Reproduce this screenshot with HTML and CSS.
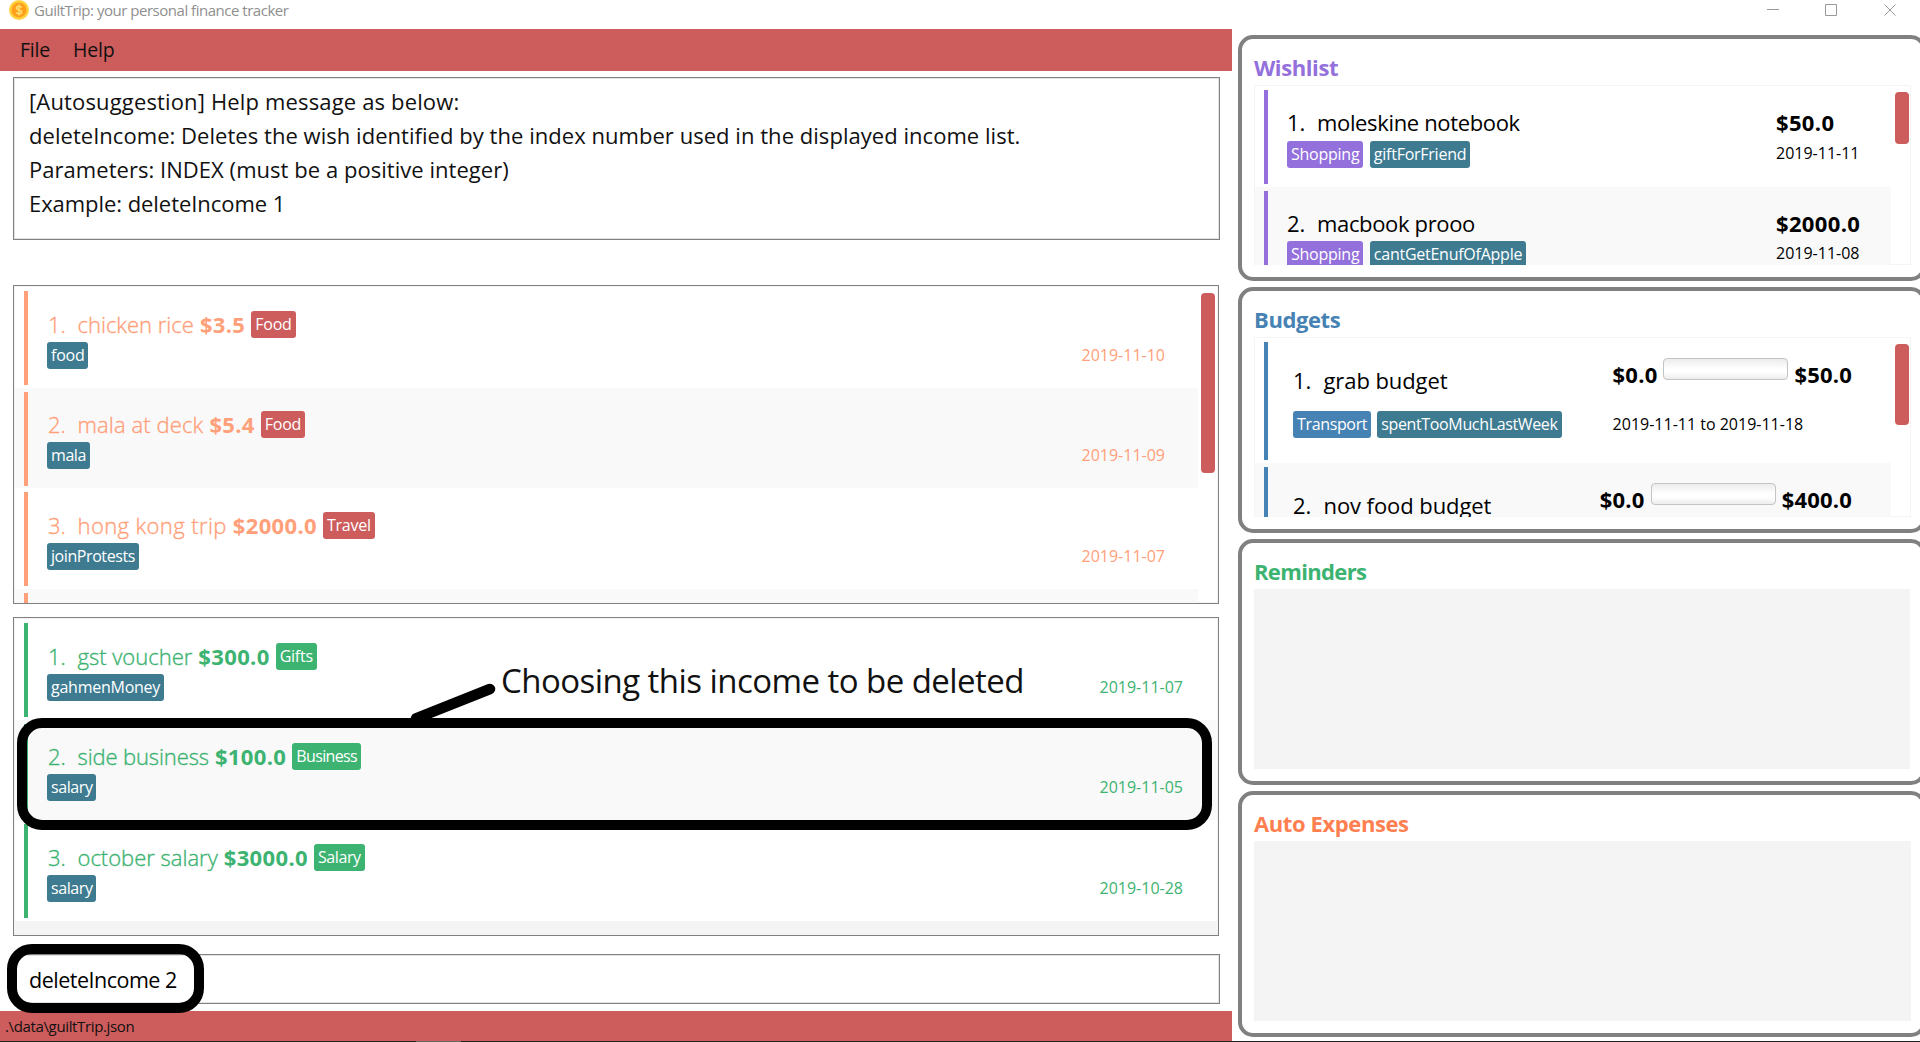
FILE: index.html
```
<!DOCTYPE html>
<html lang="en">
<head>
<meta charset="utf-8">
<title>GuiltTrip: your personal finance tracker</title>
<link rel="stylesheet" href="styles.css">
</head>
<body>
<div class="window">
  <header class="titlebar">
    <svg class="coin" viewBox="0 0 20 20"><circle cx="10" cy="10" r="10" fill="#ffd23f"/><circle cx="10" cy="10" r="7.6" fill="#ff9f1c"/><path d="M12.7 7.6C12.3 6.6 11.3 6.2 10 6.2c-1.500 0-2.600.7-2.600 1.900 0 2.600 5.300 1.200 5.300 3.900 0 1.200-1.200 1.900-2.700 1.900-1.400 0-2.500-.5-2.800-1.600M10 4.600v10.800" fill="none" stroke="#ffe070" stroke-width="1.500"/></svg>
    <span class="caption">GuiltTrip: your personal finance tracker</span>
    <svg class="controls" viewBox="0 0 130 14"><path d="M0 6.500h12M58.500 1.500h11v11h-11zM117.500 1.500l11 11M128.500 1.500l-11 11" fill="none" stroke="#999" stroke-width="1"/></svg>
  </header>

  <div class="content">
    <main class="main">
      <nav class="menubar"><span>File</span><span>Help</span></nav>
      <section class="result">
        <p class="lead">[Autosuggestion] Help message as below:</p>
        <p>deleteIncome: Deletes the wish identified by the index number used in the displayed income list.</p>
        <p>Parameters: INDEX (must be a positive integer)</p>
        <p class="example">Example: deleteIncome 1</p>
      </section>

      <section class="records expenses">
        <ul class="rows">
          <li class="row"><div class="card">
            <div class="line"><span class="idx">1.</span><span class="name">chicken rice</span><b>$3.5</b><span class="tag category">Food</span></div>
            <div class="line second"><span class="tag">food</span><time>2019-11-10</time></div>
          </div></li>
          <li class="row"><div class="card">
            <div class="line"><span class="idx">2.</span><span class="name loose">mala at deck</span><b>$5.4</b><span class="tag category">Food</span></div>
            <div class="line second"><span class="tag tight">mala</span><time>2019-11-09</time></div>
          </div></li>
          <li class="row"><div class="card">
            <div class="line"><span class="idx">3.</span><span class="name looser">hong kong trip</span><b>$2000.0</b><span class="tag category">Travel</span></div>
            <div class="line second"><span class="tag tight">joinProtests</span><time>2019-11-07</time></div>
          </div></li>
          <li class="row"><div class="card"></div></li>
        </ul>
        <div class="track"><div class="thumb"></div></div>
      </section>

      <section class="records incomes">
        <ul class="rows">
          <li class="row"><div class="card">
            <div class="line"><span class="idx">1.</span><span class="name">gst voucher</span><b>$300.0</b><span class="tag category">Gifts</span></div>
            <div class="line second"><span class="tag">gahmenMoney</span><time>2019-11-07</time></div>
          </div></li>
          <li class="row"><div class="card">
            <div class="line"><span class="idx">2.</span><span class="name snug">side business</span><b>$100.0</b><span class="tag category tighter">Business</span></div>
            <div class="line second"><span class="tag tight">salary</span><time>2019-11-05</time></div>
          </div></li>
          <li class="row"><div class="card">
            <div class="line"><span class="idx">3.</span><span class="name">october salary</span><b>$3000.0</b><span class="tag category tight">Salary</span></div>
            <div class="line second"><span class="tag tight">salary</span><time>2019-10-28</time></div>
          </div></li>
        </ul>
      </section>

      <div class="command">deleteIncome 2</div>
      <footer class="status">.\data\guiltTrip.json</footer>
    </main>

    <aside class="side">
      <section class="panel wishes">
        <h2>Wishlist</h2>
        <div class="list">
          <ul class="rows">
            <li class="row"><div class="card">
              <div class="details">
                <div class="line"><span class="idx">1.</span><span class="name">moleskine notebook</span></div>
                <div class="line second"><span class="tag category">Shopping</span><span class="tag">giftForFriend</span></div>
              </div>
              <div class="figures"><b>$50.0</b><time>2019-11-11</time></div>
            </div></li>
            <li class="row"><div class="card">
              <div class="details">
                <div class="line"><span class="idx">2.</span><span class="name">macbook prooo</span></div>
                <div class="line second"><span class="tag category">Shopping</span><span class="tag">cantGetEnufOfApple</span></div>
              </div>
              <div class="figures"><b>$2000.0</b><time>2019-11-08</time></div>
            </div></li>
          </ul>
          <div class="track"><div class="thumb"></div></div>
        </div>
      </section>

      <section class="panel budgets">
        <h2>Budgets</h2>
        <div class="list">
          <ul class="rows">
            <li class="row"><div class="card">
              <div class="details">
                <div class="line"><span class="idx">1.</span><span class="name">grab budget</span></div>
                <div class="line second"><span class="tag category">Transport</span><span class="tag">spentTooMuchLastWeek</span></div>
              </div>
              <div class="figures"><div class="spent"><b>$0.0</b><span class="progress"></span><b>$50.0</b></div><time>2019-11-11 to 2019-11-18</time></div>
            </div></li>
            <li class="row"><div class="card">
              <div class="details">
                <div class="line"><span class="idx">2.</span><span class="name">nov food budget</span></div>
              </div>
              <div class="figures"><div class="spent"><b>$0.0</b><span class="progress"></span><b>$400.0</b></div></div>
            </div></li>
          </ul>
          <div class="track"><div class="thumb"></div></div>
        </div>
      </section>

      <section class="panel reminders"><h2>Reminders</h2><div class="list"></div></section>
      <section class="panel autos"><h2>Auto Expenses</h2><div class="list"></div></section>
    </aside>
  </div>

  <div class="desktop-edge"><span></span></div>

  <div class="callout callout-row"></div>
  <div class="callout callout-command"></div>
  <svg class="pointer" viewBox="0 0 100 50"><path d="M90 17L16 46.500" stroke="#000" stroke-width="10.500" stroke-linecap="round"/></svg>
  <div class="note">Choosing this income to be deleted</div>
</div>
</body>
</html>
```
FILE: styles.css
```
* { box-sizing: border-box; }
body { margin: 0; background: #fff; color: #000; font-family: "Open Sans", "Noto Sans", sans-serif; font-size: 22px; }
ul, h2, p { margin: 0; padding: 0; list-style: none; }
.window { position: relative; width: 1920px; height: 1042px; overflow: hidden; display: flex; flex-direction: column; white-space: nowrap; }

.titlebar { height: 29px; flex: none; display: flex; align-items: flex-start; padding-left: 9px; }
.coin { width: 20px; height: 20px; flex: none; }
.caption { margin-left: 5px; font-size: 15px; line-height: 20px; letter-spacing: -0.48px; color: #8f8f8f; }
.controls { width: 130px; height: 14px; margin: 3px 23px 0 auto; }

.content { flex: 1; display: flex; min-height: 0; }
.main { width: 1232px; flex: none; display: flex; flex-direction: column; }
.menubar { height: 42px; flex: none; background: #cd5c5c; display: flex; gap: 23px; padding-left: 20px; font-size: 19.500px; line-height: 41px; letter-spacing: -0.2px; color: #111; }

.result { height: 163px; flex: none; margin: 6px 12px 45px 13px; border: 1px solid #808080; box-shadow: inset 0 0 0 1px #e4e4e4; padding: 6px 0 0 15px; line-height: 34px; letter-spacing: 0.04px; color: #111; }
.lead { letter-spacing: 0.15px; }
.example { letter-spacing: -0.06px; }

.records { height: 319px; flex: none; margin: 0 13px 13px; border: 1px solid #808080; padding: 1px; background: #f4f4f4; display: flex; overflow: hidden; }
.rows { flex: 1; min-width: 0; }
.row { height: 100.600px; padding: 4px 0 0 9px; background: #fff; }
.row:nth-child(even) { background: #f9f9f9; }
.card { height: 94px; border-left: 4px solid var(--accent); padding: 19px 0 0 19px; }
.line { display: flex; align-items: flex-start; height: 27px; line-height: 26px; }
.second { margin-top: 4px; }
.idx { width: 29.500px; flex: none; }
.tag { height: 27px; margin-right: 6px; padding: 0 4px; border-radius: 3px; background: #3e7b91; color: #fff; font-size: 16px; line-height: 27px; letter-spacing: -0.25px; }
.tight { letter-spacing: -0.42px; }
.tighter { letter-spacing: -0.62px; }
time { font-size: 16px; line-height: 27px; }
b { font-weight: 700; letter-spacing: 0.35px; }
.category { background: var(--category); }

.expenses { --accent: #ffa07a; --category: #cd5c5c; }
.incomes { --accent: #3cb371; --category: #3cb371; margin-bottom: 18px; }
.records .card { color: var(--accent); padding-top: 19.500px; }
.records .idx { margin-left: 1px; }
.records .idx, .records .name { font-weight: 300; -webkit-text-stroke: 0.350px currentColor; }
.loose { letter-spacing: 0.12px; }
.looser { letter-spacing: 0.4px; }
.snug { letter-spacing: -0.12px; }
.records b { margin: 0 6px; }
.records time { margin: 0 33px 0 auto; }
.incomes time { margin-right: 34px; }

.track { width: 19px; flex: none; background: #fff; padding: 6px 2px 0 3px; }
.thumb { width: 14px; height: 180px; border-radius: 4px; background: #cd5c5c; }

.command { height: 50px; flex: none; margin: 0 12px 7px 13px; border: 1px solid #808080; box-shadow: inset 0 0 0 1px #e4e4e4; padding-left: 15px; font-size: 21.500px; line-height: 49px; letter-spacing: -0.5px; }
.status { height: 30px; flex: none; background: #cd5c5c; padding-left: 5px; font-size: 15px; line-height: 30px; letter-spacing: -0.360px; color: #111; }

.side { flex: none; width: 688px; margin: 6px 0 0 6px; display: flex; flex-direction: column; gap: 6px; }
.panel { height: 246px; flex: none; border: 4px solid #808080; border-radius: 15px; padding: 12px 8px 12px 12px; display: flex; flex-direction: column; }
.panel h2 { height: 34px; flex: none; color: var(--accent); font-size: 22px; line-height: 33px; letter-spacing: -0.4px; }
.list { width: 657px; height: 180px; flex: none; background: #f4f4f4; padding: 1px; display: flex; overflow: hidden; }
.panel .track { padding: 6px 0 0 4px; }
.panel .thumb { height: 52px; }
.panel .card { display: flex; padding-top: 0; }
.panel .name { letter-spacing: -0.35px; }
.panel .idx { width: 30px; }
.figures { margin-left: auto; display: flex; flex-direction: column; line-height: 27px; }

.wishes { --accent: #9370db; --category: #9370db; }
.wishes .details { padding-top: 19px; }
.wishes .second { margin-top: 4.600px; }
.wishes .tag { margin-right: 6.500px; }
.wishes .figures { width: 115px; padding-top: 19px; gap: 4.600px; line-height: 26px; }

.budgets { --accent: #4682b4; --category: #4682b4; }
.budgets .row { height: 125px; }
.budgets .card { height: 118px; padding-left: 25px; }
.budgets .details { padding-top: 25px; }
.budgets .idx { width: 30.500px; }
.budgets .name { letter-spacing: -0.08px; }
.budgets .second { margin-top: 17px; }
.budgets .tag { letter-spacing: -0.350px; }
.budgets .figures { padding: 16px 39px 0 0; }
.spent { display: flex; margin-bottom: 29px; line-height: 32px; height: 24px; }
.spent b { letter-spacing: 0.2px; }
.progress { width: 125px; height: 22px; margin: 0 6px; border: 1px solid #c4c4c4; border-radius: 4px; background: linear-gradient(#ececec, #fff 50%, #fff 65%, #ededed); }
.budgets .thumb { height: 81px; }
.reminders { --accent: #3cb371; }
.panel.reminders h2 { letter-spacing: -0.65px; }
.reminders .list { width: 656px; }
.autos { --accent: #ff7f50; }

.desktop-edge { height: 1px; flex: none; background: #202020; }
.desktop-edge span { display: block; width: 45px; height: 1px; margin-left: 416px; background: #666; }

.callout { position: absolute; border: 10px solid #000; }
.callout-row { left: 17px; top: 718px; width: 1195px; height: 112px; border-radius: 25px; }
.callout-command { left: 7px; top: 944px; width: 197px; height: 69px; border-radius: 25px; }
.pointer { position: absolute; left: 400px; top: 672px; width: 100px; height: 50px; overflow: hidden; }
.note { position: absolute; left: 501px; top: 658px; font-size: 33px; line-height: 46px; letter-spacing: -0.550px; color: #111; }
```
